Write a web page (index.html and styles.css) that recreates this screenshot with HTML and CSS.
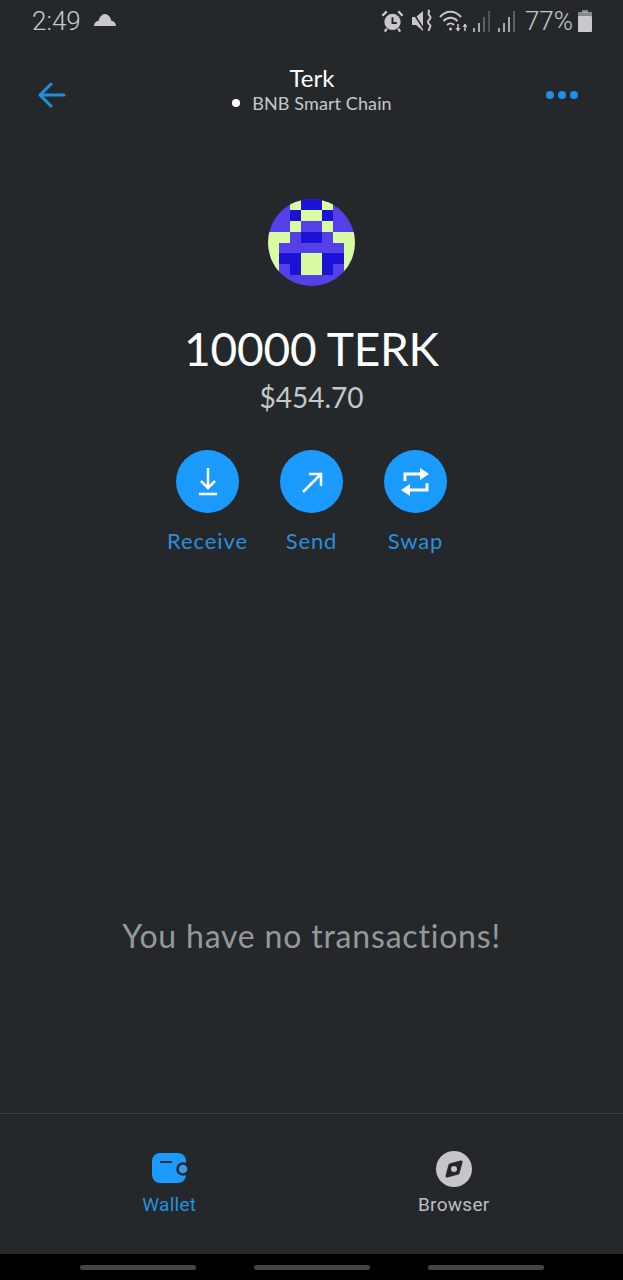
FILE: index.html
```html
<!DOCTYPE html>
<html lang="en">

<head>
    <meta charset="UTF-8">
    <meta name="viewport" content="width=device-width, initial-scale=1">
    <title>Terk</title>
    <link rel="stylesheet" href="styles.css">
</head>

<body>
    <main class="screen">
        <div class="status-bar">
            <div class="status-left">
                <span class="clock">2:49</span>
                <svg class="icon-cloud" viewBox="0 0 24 14" fill="currentColor">
                    <path d="M1 14c0-3 2-5 4.500-5C6.500 5 9 2 12 2s5.500 3 6.500 7C21 9 23 11 23 14z"></path>
                </svg>
            </div>
            <div class="status-right">
                <svg class="icon-alarm" viewBox="0 0 24 24">
                    <circle cx="12" cy="13" r="8.500" fill="currentColor"></circle>
                    <path d="M12 8v6h4.500" fill="none" stroke="#24282b" stroke-width="2"></path>
                    <path d="M1.500 6.500 6 2M22.500 6.500 18 2M6 20l-2 3M18 20l2 3" stroke="currentColor" stroke-width="2.500"></path>
                </svg>
                <svg class="icon-mute" viewBox="0 0 22 24">
                    <path d="M1 8h4l7-6v20l-7-6H1z" fill="currentColor"></path>
                    <path d="M1 2l13 20" stroke="#24282b" stroke-width="1.500"></path>
                    <path d="M17 1c3 2-1 3 1 5s2 3 0 5-1 3 1 5-2 3-1 6" fill="none" stroke="currentColor" stroke-width="2"></path>
                </svg>
                <svg class="icon-wifi" viewBox="0 0 28 24" fill="none" stroke="currentColor" stroke-width="2">
                    <path d="M1 8c6-7 15-7 21 0"></path>
                    <path d="M4.500 12c4-4.500 10-4.500 14 0"></path>
                    <path d="M8 16c2-2 5-2 7 0"></path>
                    <circle cx="11.500" cy="20" r="1.500" fill="currentColor" stroke="none"></circle>
                    <path d="M19 15v7M26 22v-7" stroke-width="1.500"></path>
                    <path d="M16.500 19l2.500 3.500 2.500-3.500M23.500 18l2.500-3.500 2.500 3.500" fill="currentColor" stroke="none"></path>
                </svg>
                <svg class="icon-signal" viewBox="0 0 18 24" fill="currentColor">
                    <rect x="0" y="19" width="2" height="4"></rect>
                    <rect x="5" y="14" width="2" height="9"></rect>
                    <rect x="10" y="8" width="2" height="15" opacity=".45"></rect>
                    <rect x="15" y="2" width="2" height="21" opacity=".35"></rect>
                </svg>
                <svg class="icon-signal icon-signal-2" viewBox="0 0 18 24" fill="currentColor">
                    <rect x="0" y="19" width="2" height="4"></rect>
                    <rect x="5" y="14" width="2" height="9"></rect>
                    <rect x="10" y="8" width="2" height="15"></rect>
                    <rect x="15" y="2" width="2" height="21" opacity=".45"></rect>
                </svg>
                <span class="battery-text">77%</span>
                <svg class="icon-battery" viewBox="0 0 14 22" fill="currentColor">
                    <rect x="4" y="0" width="6" height="3" opacity=".6"></rect>
                    <rect x="0" y="2" width="14" height="4" opacity=".6"></rect>
                    <rect x="0" y="6" width="14" height="16" rx="1"></rect>
                </svg>
            </div>
        </div>

        <header class="nav">
            <svg class="icon-back" viewBox="0 0 28 26" fill="none" stroke="currentColor" stroke-width="3" stroke-linecap="round" stroke-linejoin="round">
                <path d="M26 13H2M13 2 2 13l11 11"></path>
            </svg>
            <div class="nav-title">
                <div class="token-name">Terk</div>
                <div class="network"><span class="network-dot"></span>BNB Smart Chain</div>
            </div>
            <div class="more"><span></span><span></span><span></span></div>
        </header>

        <section class="token">
            <svg class="avatar" viewBox="0 0 8 8" shape-rendering="crispEdges">
                <rect width="8" height="8" fill="#5440e6"></rect>
                <g fill="#d9fca3">
                    <rect x="2" y="0" width="1" height="1"></rect>
                    <rect x="5" y="0" width="1" height="1"></rect>
                    <rect x="3" y="1" width="2" height="1"></rect>
                    <rect x="2" y="2" width="1" height="1"></rect>
                    <rect x="5" y="2" width="1" height="1"></rect>
                    <rect x="0" y="3" width="2" height="1"></rect>
                    <rect x="6" y="3" width="2" height="1"></rect>
                    <rect x="0" y="4" width="1" height="3"></rect>
                    <rect x="7" y="4" width="1" height="3"></rect>
                    <rect x="3" y="5" width="2" height="2"></rect>
                </g>
                <g fill="#1c12d6">
                    <rect x="3" y="0" width="2" height="1"></rect>
                    <rect x="2" y="1" width="1" height="1"></rect>
                    <rect x="5" y="1" width="1" height="1"></rect>
                    <rect x="3" y="3" width="2" height="1"></rect>
                    <rect x="1" y="5" width="2" height="1"></rect>
                    <rect x="5" y="5" width="2" height="1"></rect>
                    <rect x="2" y="6" width="1" height="1"></rect>
                    <rect x="5" y="6" width="1" height="1"></rect>
                </g>
            </svg>
            <div class="balance">10000 TERK</div>
            <div class="fiat">$454.70</div>

            <div class="actions">
                <div class="action">
                    <div class="action-circle">
                        <svg viewBox="0 0 32 32" fill="none" stroke="#fff" stroke-width="2.500">
                            <path d="M16 2v20M9 15l7 7 7-7M7 28h18"></path>
                        </svg>
                    </div>
                    <span>Receive</span>
                </div>
                <div class="action">
                    <div class="action-circle">
                        <svg viewBox="0 0 32 32" fill="none" stroke="#fff" stroke-width="2.500">
                            <path d="M7 26 25 8M13 8h12v12"></path>
                        </svg>
                    </div>
                    <span>Send</span>
                </div>
                <div class="action">
                    <div class="action-circle">
                        <svg viewBox="0 0 32 32" fill="none" stroke="#fff" stroke-width="3">
                            <path d="M21 8H5v7M27 17v7H9"></path>
                            <path d="M20 2l9 6-9 6zM10 18l-9 6 9 6z" fill="#fff" stroke="none"></path>
                        </svg>
                    </div>
                    <span>Swap</span>
                </div>
            </div>
        </section>

        <div class="empty">You have no transactions!</div>

        <nav class="tabs">
            <div class="tab tab-active">
                <svg class="tab-icon" viewBox="0 0 36 36">
                    <rect x="1" y="2" width="34" height="30" rx="8" fill="#1b9aff"></rect>
                    <path d="M9 11h12" stroke="#24282b" stroke-width="2"></path>
                    <circle cx="32" cy="18" r="5.500" fill="#3a9ce6" stroke="#24282b" stroke-width="2.500"></circle>
                </svg>
                <span>Wallet</span>
            </div>
            <div class="tab">
                <svg class="tab-icon" viewBox="0 0 36 36">
                    <circle cx="18" cy="18" r="18" fill="#c4c6c8"></circle>
                    <path d="M25 11 22 22 11 25 14 14z" fill="#24282b" stroke="#24282b" stroke-width="3" stroke-linejoin="round"></path>
                    <circle cx="18" cy="18" r="3" fill="#c4c6c8"></circle>
                </svg>
                <span>Browser</span>
            </div>
        </nav>

        <div class="system-nav"><span></span><span></span><span></span></div>
    </main>
</body>

</html>
```

FILE: styles.css
```css
html,
body {
    margin: 0;
    padding: 0;
    background-color: #24282b;
}

.screen {
    height: 1280px;
    overflow: hidden;
    display: flex;
    flex-direction: column;
    background-color: #24282b;
    color: #fff;
    font-family: Lato, "Open Sans", sans-serif;
}

.status-bar {
    height: 42px;
    flex: none;
    display: flex;
    justify-content: space-between;
    align-items: center;
    padding: 0 31px 0 32px;
    color: #c6c8c9;
    font-family: Roboto, sans-serif;
    font-weight: 300;
    font-size: 26px;
}

.status-left,
.status-right {
    display: flex;
    align-items: center;
}

.icon-cloud {
    width: 24px;
    height: 14px;
    margin: 0 0 4px 12px;
}

.icon-alarm {
    width: 23px;
    height: 24px;
}

.icon-mute {
    width: 22px;
    height: 24px;
    margin-left: 7px;
}

.icon-wifi {
    width: 28px;
    height: 24px;
    margin-left: 6px;
}

.icon-signal {
    width: 18px;
    height: 24px;
    margin-left: 6px;
    opacity: .8;
}

.icon-signal-2 {
    margin-left: 7px;
}

.battery-text {
    margin-left: 9px;
}

.icon-battery {
    width: 14px;
    height: 22px;
    margin-left: 5px;
}

.nav {
    flex: none;
    height: 103px;
    display: flex;
    align-items: center;
    justify-content: space-between;
    padding: 0 46px 0 38px;
}

.icon-back {
    width: 28px;
    height: 26px;
    margin-top: 3px;
    color: #1f8fe0;
}

.nav-title {
    text-align: center;
    margin-left: 12px;
    padding-bottom: 9px;
}

.token-name {
    font-size: 24px;
    line-height: 27px;
}

.network {
    font-size: 18px;
    line-height: 24px;
    letter-spacing: .1px;
    color: #c6c8c9;
    display: flex;
    align-items: center;
}

.network-dot {
    width: 8px;
    height: 8px;
    margin-right: 12px;
    border-radius: 50%;
    background-color: #fff;
}

.more {
    display: flex;
    gap: 4px;
    margin-top: 3px;
    margin-right: -1px;
}

.more span {
    width: 8px;
    height: 8px;
    border-radius: 50%;
    background-color: #1b8fe6;
}

.token {
    flex: none;
    padding-top: 54px;
    display: flex;
    flex-direction: column;
    align-items: center;
}

.avatar {
    width: 87px;
    height: 87px;
    border-radius: 50%;
}

.balance {
    margin-top: 33px;
    font-size: 46px;
    line-height: 60px;
    letter-spacing: -.2px;
}

.fiat {
    margin-top: 1px;
    font-size: 28px;
    line-height: 34px;
    color: #c6c8c9;
}

.actions {
    margin-top: 36px;
    display: flex;
    gap: 24px;
}

.action {
    width: 80px;
    display: flex;
    flex-direction: column;
    align-items: center;
    color: #2a8fdc;
    font-size: 22px;
    line-height: 28px;
    letter-spacing: .9px;
}

.action-circle {
    width: 63px;
    height: 63px;
    margin-bottom: 14px;
    border-radius: 50%;
    background-color: #1b9aff;
    display: flex;
    align-items: center;
    justify-content: center;
}

.action-circle svg {
    width: 32px;
    height: 32px;
}

.empty {
    flex: 1;
    padding-top: 361px;
    text-align: center;
    font-size: 32px;
    line-height: 40px;
    letter-spacing: .8px;
    color: #96989a;
}

.tabs {
    flex: none;
    height: 141px;
    box-sizing: border-box;
    padding: 0 27px;
    border-top: 1px solid #3b3f42;
    display: flex;
    font-family: Roboto, sans-serif;
}

.tab {
    flex: 1;
    padding-top: 37px;
    display: flex;
    flex-direction: column;
    align-items: center;
    font-size: 19px;
    line-height: 24px;
    letter-spacing: .3px;
    color: #bcbec0;
}

.tab-active {
    color: #2a8fdc;
}

.tab-icon {
    height: 36px;
    width: 36px;
    margin-bottom: 6px;
    overflow: visible;
}

.system-nav {
    flex: none;
    height: 26px;
    background-color: #000;
    display: flex;
    align-items: center;
    justify-content: center;
    gap: 58px;
}

.system-nav span {
    width: 116px;
    height: 5px;
    border-radius: 3px;
    background-color: #444;
}
```
